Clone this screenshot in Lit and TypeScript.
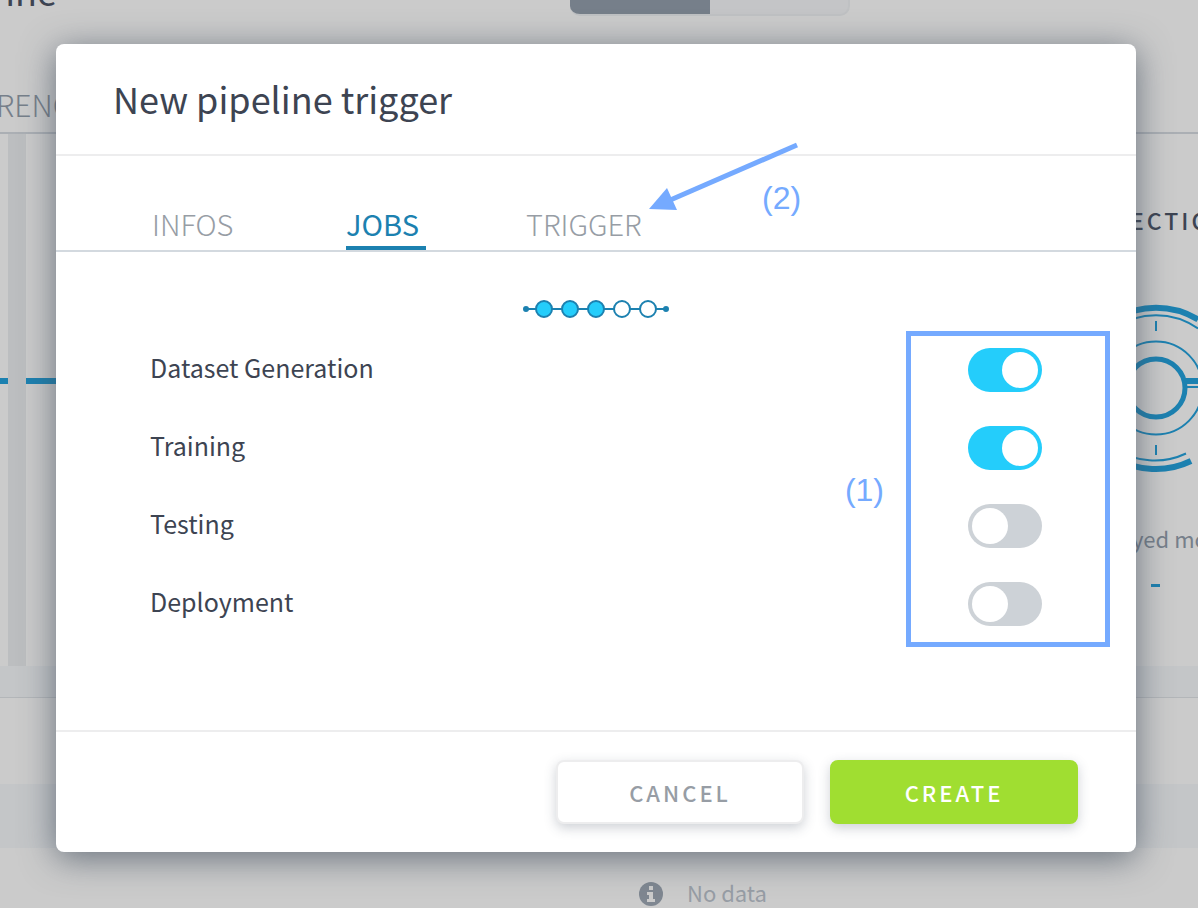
import { LitElement, html, css, svg } from "lit";
import { customElement, state } from "lit/decorators.js";

interface Job {
  id: string;
  label: string;
  enabled: boolean;
}

const STEPS = [true, true, true, false, false];

/** Dimmed pipeline page that stays visible behind the dialog. */
@customElement("pipeline-backdrop")
export class PipelineBackdrop extends LitElement {
  static styles = css`
    :host {
      display: flex;
      flex-direction: column;
      height: 100%;
      overflow: hidden;
      background: #cbcbcb;
      color: #3d4452;
    }
    .topbar {
      display: grid;
      grid-template-columns: 57px 1fr 57px;
      grid-template-rows: 16px;
      height: 16px;
      flex: none;
    }
    .page-name {
      display: flex;
      justify-content: flex-end;
      align-items: flex-end;
      font-size: 36px;
      line-height: 52px;
    }
    .switcher {
      display: flex;
      justify-self: center;
      width: 280px;
      margin-left: 222px;
      border-radius: 0 0 10px 10px;
      overflow: hidden;
      box-sizing: border-box;
      background: #c4c5c7;
      border: 2px solid #bfc1c3;
      border-width: 0 2px 2px 0;
    }
    .switcher-on {
      width: 140px;
      background: #767f8a;
      margin-bottom: -2px;
    }
    .tabs {
      flex: none;
      height: 116px;
      border-bottom: 2px solid #abafb4;
      display: flex;
      align-items: flex-end;
    }
    .tab {
      margin-left: -4px;
      font-size: 30px;
      font-weight: 300;
      line-height: 56px;
      color: #767f8a;
    }
    .cards {
      flex: none;
      display: grid;
      grid-template-columns: 8px 1fr 84px;
      height: 532px;
      background: #bcbec0;
    }
    .card {
      background: #cbcbcb;
      min-width: 0;
      overflow: hidden;
    }
    .card.main {
      margin-left: 18px;
    }
    .wire {
      height: 6px;
      margin-top: 244px;
      background: #1c81b0;
    }
    .metric {
      display: flex;
      flex-direction: column;
      white-space: nowrap;
    }
    .metric-name {
      margin: 68px 0 0 16px;
      font-size: 23px;
      font-weight: 500;
      line-height: 36px;
      letter-spacing: 3px;
    }
    .gauge {
      display: block;
      width: 84px;
      height: 180px;
      margin-top: 60px;
    }
    .metric-note {
      margin: 42px 0 0 18px;
      font-size: 22px;
      line-height: 36px;
      color: #767f8a;
    }
    .dash {
      width: 9px;
      height: 3px;
      margin: 28px 0 0 37px;
      background: #1c81b0;
    }
    .strip {
      flex: none;
      height: 31px;
      background: #c4c6c8;
      border-bottom: 1px solid #b3b6b9;
    }
    .panel {
      flex: none;
      height: 86px;
    }
    .thead {
      flex: none;
      height: 64px;
      background: #c4c6c8;
    }
    .empty {
      flex: none;
      display: flex;
      justify-content: center;
      align-items: center;
      gap: 24px;
      height: 92px;
      padding-left: 208px;
      font-size: 22px;
      line-height: 32px;
      color: #979da5;
    }
    .empty-text {
      padding-bottom: 4px;
    }
    .info {
      width: 24px;
      height: 24px;
    }
  `;

  render() {
    return html`
      <div class="topbar">
        <span class="page-name">ine</span>
        <span class="switcher"><span class="switcher-on"></span></span>
      </div>
      <div class="tabs"><span class="tab">RENC</span></div>
      <div class="cards">
        <div class="card"><div class="wire"></div></div>
        <div class="card main"><div class="wire"></div></div>
        <div class="card metric">
          <span class="metric-name">ECTIO</span>
          <svg class="gauge" viewBox="0 0 84 180" fill="none" stroke="#1c81b0" aria-hidden="true">
            <path stroke-width="6" d="M0 21.500A81 81 0 0 1 84 21.500M0 159.500A81 81 0 0 0 77 163" />
            <path stroke-width="2" d="M0 30.500A73 73 0 0 1 84 30.500M0 150A73 73 0 0 0 72 155.500" />
            <circle cx="42" cy="90" r="46.500" stroke-width="2" />
            <circle cx="42" cy="90" r="29" stroke-width="5" />
            <path stroke-width="2" d="M42 23v10M42 147v10M71 89h13" />
            <path stroke-width="6" d="M70 83h14" />
          </svg>
          <span class="metric-note">yed mo</span>
          <div class="dash"></div>
        </div>
      </div>
      <div class="strip"></div>
      <div class="panel"></div>
      <div class="thead"></div>
      <div class="empty">
        <svg class="info" viewBox="0 0 24 24" aria-hidden="true">
          <circle cx="12" cy="12" r="12" fill="#7f8791" />
          <path fill="#cbcbcb" d="M10 4h4v4h-4zM8 10h6v7h2v3H8v-3h2v-4H8z" />
        </svg>
        <span class="empty-text">No data</span>
      </div>
    `;
  }
}

@customElement("app-root")
export class AppRoot extends LitElement {
  static styles = css`
    :host {
      display: block;
      position: relative;
      min-height: 100vh;
      overflow: hidden;
      font-family: "Noto Sans CJK SC", "Open Sans", sans-serif;
      color: #3d4452;
    }
    .behind {
      position: absolute;
      inset: 0;
    }
    .layer {
      position: relative;
      padding: 44px 62px 56px 56px;
    }
    .dialog {
      position: relative;
      background: #fff;
      border-radius: 8px;
      box-shadow: 0 6px 34px rgba(61, 74, 90, 0.7);
    }
    .header {
      padding: 26px 57px 28px;
      border-bottom: 2px solid #ededee;
    }
    .title {
      margin: 0;
      font-size: 36px;
      font-weight: 400;
      line-height: 56px;
    }
    .tabs {
      display: flex;
      gap: 100px;
      padding: 44px 96px 0;
      border-bottom: 2px solid #d3d9df;
    }
    .tab {
      font: inherit;
      font-size: 29px;
      font-weight: 300;
      line-height: 46px;
      height: 50px;
      padding: 0;
      border: 0;
      border-bottom: 4px solid transparent;
      background: none;
      color: #979da5;
      min-width: 80px;
      text-align: left;
    }
    .tab:first-child {
      min-width: 94px;
    }
    .tab.active {
      font-weight: 400;
      color: #1c81b0;
      border-color: #1c81b0;
    }
    .body {
      padding: 48px 94px 104px;
    }
    .steps {
      display: block;
      width: 146px;
      height: 18px;
      margin: 0 auto 30px;
    }
    .jobs {
      display: flex;
      flex-direction: column;
      gap: 34px;
    }
    .job {
      display: flex;
      align-items: flex-start;
      justify-content: space-between;
      font-size: 25px;
      line-height: 38px;
    }
    .switch {
      appearance: none;
      box-sizing: border-box;
      width: 74px;
      height: 44px;
      margin: 0;
      padding: 4px;
      border-radius: 22px;
      background: #cdd2d7;
      display: flex;
    }
    .switch::before {
      content: "";
      width: 36px;
      height: 36px;
      border-radius: 50%;
      background: #fff;
    }
    .switch:checked {
      background: #24cdfb;
      justify-content: flex-end;
    }
    .footer {
      display: flex;
      justify-content: flex-end;
      gap: 26px;
      padding: 28px 58px;
      border-top: 2px solid #ededee;
    }
    .button {
      box-sizing: border-box;
      width: 248px;
      height: 64px;
      font: inherit;
      font-size: 22px;
      font-weight: 500;
      letter-spacing: 3px;
      border: 2px solid #ededee;
      border-radius: 8px;
      background: #fff;
      color: #979da5;
      box-shadow: 0 4px 12px rgba(61, 72, 92, 0.25);
    }
    .button.primary {
      border-color: #a0de31;
      background: #a0de31;
      color: #fff;
    }
    .note {
      position: absolute;
      font-family: "Liberation Sans", Arial, sans-serif;
      font-size: 32px;
      line-height: 36px;
      color: #75aaff;
    }
    .note.first {
      top: 428px;
      right: 252px;
    }
    .note.second {
      top: 136px;
      left: 706px;
    }
    .frame {
      position: absolute;
      top: 287px;
      right: 26px;
      box-sizing: border-box;
      width: 204px;
      height: 316px;
      border: 5px solid #75aaff;
      pointer-events: none;
    }
    .arrow {
      position: absolute;
      top: 96px;
      left: 592px;
      width: 152px;
      height: 74px;
      pointer-events: none;
    }
  `;

  @state() private active = "JOBS";

  @state() private jobs: Job[] = [
    { id: "dataset", label: "Dataset Generation", enabled: true },
    { id: "training", label: "Training", enabled: true },
    { id: "testing", label: "Testing", enabled: false },
    { id: "deployment", label: "Deployment", enabled: false },
  ];

  private toggle(id: string) {
    this.jobs = this.jobs.map((j) => (j.id === id ? { ...j, enabled: !j.enabled } : j));
  }

  render() {
    return html`
      <pipeline-backdrop class="behind"></pipeline-backdrop>
      <div class="layer">
        <section class="dialog" role="dialog" aria-labelledby="title">
          <header class="header"><h1 class="title" id="title">New pipeline trigger</h1></header>
          <div class="tabs" role="tablist">
            ${["INFOS", "JOBS", "TRIGGER"].map(
              (name) => html`<button
                class="tab ${name === this.active ? "active" : ""}"
                role="tab"
                aria-selected=${name === this.active}
                @click=${() => (this.active = name)}
              >${name}</button>`
            )}
          </div>
          <div class="body">
            <svg class="steps" viewBox="0 0 146 18" stroke="#1c81b0" stroke-width="2" aria-hidden="true">
              <path d="M3 9h140" />
              <circle cx="3" cy="9" r="2" fill="#1c81b0" />
              <circle cx="143" cy="9" r="2" fill="#1c81b0" />
              ${STEPS.map(
                (done, i) => svg`<circle cx=${21 + i * 26} cy="9" r="8" fill=${done ? "#24cdfb" : "#fff"} />`
              )}
            </svg>
            <div class="jobs">
              ${this.jobs.map(
                (job) => html`<div class="job">
                  <label for=${job.id}>${job.label}</label>
                  <input
                    class="switch"
                    type="checkbox"
                    role="switch"
                    id=${job.id}
                    .checked=${job.enabled}
                    @change=${() => this.toggle(job.id)}
                  />
                </div>`
              )}
            </div>
          </div>
          <footer class="footer">
            <button class="button">CANCEL</button>
            <button class="button primary">CREATE</button>
          </footer>
          <div class="frame"></div>
          <span class="note first">(1)</span>
          <span class="note second">(2)</span>
          <svg class="arrow" viewBox="0 0 152 74" aria-hidden="true">
            <path d="M149 5L20 61" stroke="#75aaff" stroke-width="5" />
            <path d="M1 69L19 48L29 70z" fill="#75aaff" />
          </svg>
        </section>
      </div>
    `;
  }
}
